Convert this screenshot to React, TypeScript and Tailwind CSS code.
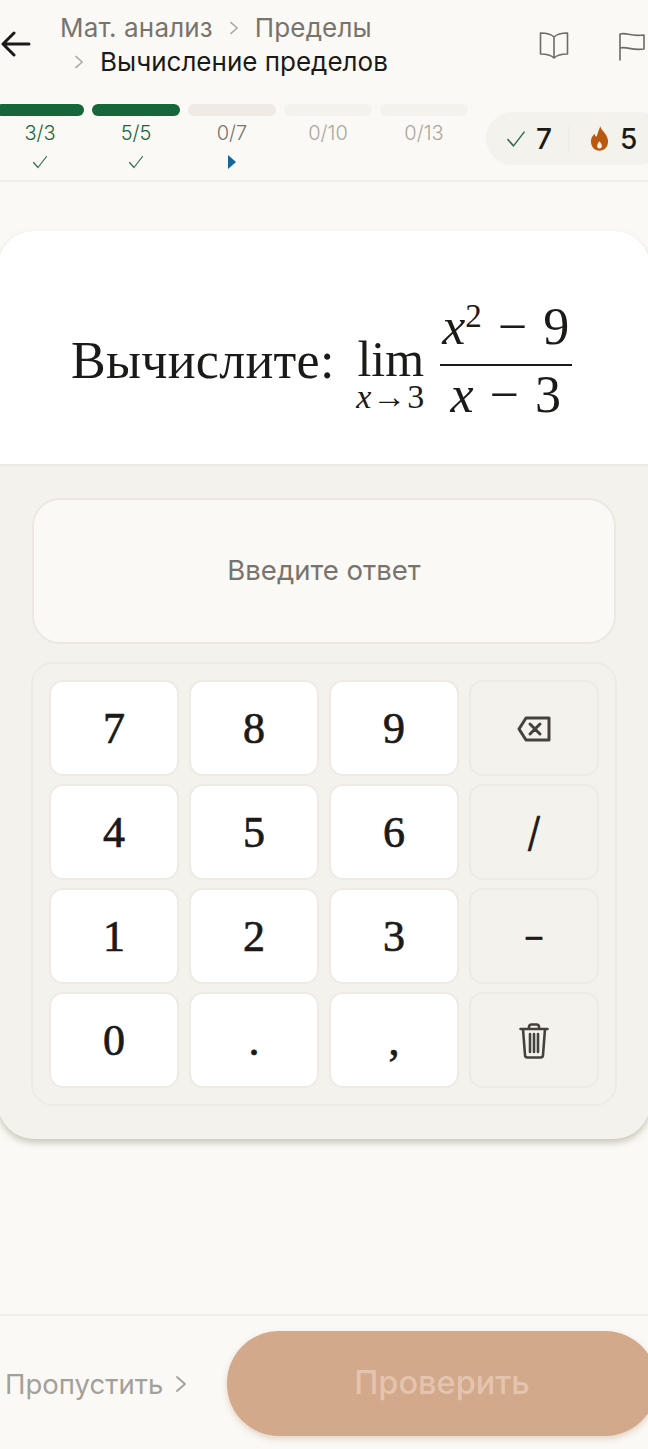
import { ReactNode } from "react";

const SANS = "font-['Inter','Noto_Sans',sans-serif]";

function Chevron({ className }: { className?: string }) {
  return (
    <svg viewBox="0 0 12 20" className={className} fill="none" stroke="currentColor" strokeWidth="1.8" strokeLinecap="round" strokeLinejoin="round">
      <path d="M2 3l8 7-8 7" />
    </svg>
  );
}

function Check({ className }: { className?: string }) {
  return (
    <svg viewBox="0 0 16 14" className={className} fill="none" stroke="currentColor" strokeWidth="1.2" strokeLinecap="round" strokeLinejoin="round">
      <path d="M1.5 7.5l4.5 5L14.5 1.5" />
    </svg>
  );
}

function Step({ label, done, active, muted, barDone, barLight }: { label: string; done?: boolean; active?: boolean; muted?: boolean; barDone?: boolean; barLight?: boolean }) {
  return (
    <div className="flex w-[88px] flex-col items-center">
      <div className={`h-3 w-full rounded-full ${barDone ? "bg-[#17663a]" : barLight ? "bg-[#f4f2ed]" : "bg-[#efebe4]"}`} />
      <div className={`mt-[7px] h-5 text-[20px] leading-5 font-light ${done ? "text-[#17663a]" : muted ? "text-[#aaa7a1]" : "text-[#78746d]"}`}>{label}</div>
      <div className="mt-[11px] flex h-4 items-center justify-center">
        {done && <Check className="h-[14px] w-4 text-[#2f6d4c]" />}
        {active && (
          <svg viewBox="0 0 10 14" className="h-[14px] w-[10px] text-[#12689c]" fill="currentColor">
            <path d="M1 0l8 7-8 7z" />
          </svg>
        )}
      </div>
    </div>
  );
}

function Key({ children, side }: { children: ReactNode; side?: boolean }) {
  return (
    <div className={`flex h-[96px] items-center justify-center rounded-[14px] border-2 border-[#eeebe6] pt-[2px] font-['Liberation_Serif',serif] text-[44px] text-[#1b1a18] [-webkit-text-stroke:0.7px_#1b1a18] ${side ? "bg-[#f4f2ed]" : "bg-white"}`}>
      {children}
    </div>
  );
}

export default function App() {
  return (
    <div className={`flex h-[1449px] w-[648px] flex-col overflow-hidden bg-[#faf9f6] ${SANS}`}>
      {/* шапка */}
      <div className="flex h-[104px] shrink-0 items-start">
        <svg viewBox="0 0 30 26" className="mt-[31px] ml-[1px] h-[26px] w-[30px] shrink-0 text-[#1b1a18]" fill="none" stroke="currentColor" strokeWidth="3" strokeLinecap="round" strokeLinejoin="round">
          <path d="M28 13H2M13 2L2 13l11 11" />
        </svg>
        <div className="ml-[29px] w-[440px] shrink-0 pt-[11px] text-[26px] leading-[34px]">
          <div className="flex items-center tracking-[0.15px] text-[#78746d]">
            Мат. анализ
            <Chevron className="mx-[16px] h-[16px] w-[10px] text-[#a9a6a0]" />
            Пределы
          </div>
          <div className="ml-[14px] flex items-center text-[#1b1a18]">
            <Chevron className="mr-[16px] h-[16px] w-[10px] text-[#a9a6a0]" />
            Вычисление пределов
          </div>
        </div>
        <svg viewBox="0 0 30 28" className="mt-[31px] ml-[39px] h-[28px] w-[30px] shrink-0 text-[#6f6b65]" fill="none" stroke="currentColor" strokeWidth="1.6" strokeLinejoin="round">
          <path d="M15 6c-3-3-8-4-13.500-4v21c5.500 0 10.500 1 13.500 4 3-3 8-4 13.500-4V2C23 2 18 3 15 6zM15 6v21" />
        </svg>
        <svg viewBox="0 0 30 30" className="mt-[31px] ml-[49px] h-[30px] w-[30px] shrink-0 text-[#6f6b65]" fill="none" stroke="currentColor" strokeWidth="1.6" strokeLinecap="round" strokeLinejoin="round">
          <path d="M2 29V3c7-2 10 3 24 1v14c-12 2-17-3-24-1" />
        </svg>
      </div>

      {/* прогресс */}
      <div className="flex h-[78px] shrink-0 items-start border-b-2 border-[#efede7]">
        <div className="-ml-1 flex gap-2">
          <Step label="3/3" done barDone />
          <Step label="5/5" done barDone />
          <Step label="0/7" active />
          <Step label="0/10" muted barLight />
          <Step label="0/13" muted barLight />
        </div>
        <div className="mt-2 ml-[18px] flex h-[53px] w-[180px] shrink-0 items-center rounded-full bg-[#f4f2ed] pl-[20px]">
          <Check className="h-[18px] w-[20px] text-[#2f6d4c]" />
          <span className="ml-[10px] text-[28px] font-medium text-[#1b1a18]">7</span>
          <div className="ml-[16px] h-[26px] w-[2px] bg-[#efede8]" />
          <svg viewBox="0 0 20 26" className="ml-[20px] h-[25px] w-[19px] text-[#b9590f]" fill="currentColor">
            <path fillRule="evenodd" d="M11 0c0 4 8 8 8 16 0 6-4 10-9 10s-9-4-9-10c0-4 2-6 4-8 0 2 1 3 2 3 1-3 2-7 4-11zM10 16c-1.500 2-2.500 3.500-2.500 5 0 1.500 1 2.500 2.500 2.500s2.500-1 2.500-2.500c0-1.500-1-3-2.500-5z" />
          </svg>
          <span className="ml-[11px] text-[28px] font-medium text-[#1b1a18]">5</span>
        </div>
      </div>

      {/* карточка задания */}
      <div className="mt-[49px] -mx-[2px] h-[908px] shrink-0 overflow-hidden rounded-[36px] bg-[#f4f2ed] shadow-[0_4px_6px_rgba(120,115,80,0.35)]">
        <div className="flex h-[235px] items-center border-b-2 border-[#ece9e3] bg-white pt-[22px] pl-[73px] font-['Liberation_Serif',serif] text-[#1b1a18]">
          <span className="mt-[4px] text-[52px] tracking-[0.3px]">Вычислите:</span>
          <div className="ml-[21px] flex w-[70px] flex-col items-center pt-[37px]">
            <span className="text-[50px] leading-[40px]">lim</span>
            <span className="text-[34px] leading-[36px] tracking-[1px] whitespace-nowrap"><i>x</i>→3</span>
          </div>
          <div className="mb-[6px] ml-[14px] flex w-[132px] flex-col items-center text-[52px]">
            <div className="leading-[75px] whitespace-nowrap">
              <i>x</i><sup className="text-[33px]">2</sup><span className="mx-[16px]">−</span>9
            </div>
            <div className="h-[2px] w-full bg-[#1b1a18]" />
            <div className="leading-[57px] whitespace-nowrap"><i>x</i><span className="mx-[16px]">−</span>3</div>
          </div>
        </div>

        <div className="px-[34px] pt-[32px]">
          <div className="flex h-[146px] items-center justify-center rounded-[28px] border-2 border-[#ece8e1] bg-[#faf9f6] text-[27.5px] text-[#78746d]">
            Введите ответ
          </div>
          <div className="mt-[18px] -mx-[1px] grid grid-cols-4 gap-x-[10px] gap-y-2 rounded-[22px] border-2 border-[#eeebe6] p-4">
            <Key>7</Key>
            <Key>8</Key>
            <Key>9</Key>
            <Key side>
              <svg viewBox="0 0 34 26" className="h-[26px] w-[34px] text-[#45423d]" fill="none" stroke="currentColor" strokeWidth="3" strokeLinejoin="round" strokeLinecap="round">
                <path d="M9 2h23v22H9L2 13zM13 8l10 10M23 8L13 18" />
              </svg>
            </Key>
            <Key>4</Key>
            <Key>5</Key>
            <Key>6</Key>
            <Key side><span className={`${SANS} text-[40px] font-light`}>/</span></Key>
            <Key>1</Key>
            <Key>2</Key>
            <Key>3</Key>
            <Key side><span className={`${SANS} text-[32px]`}>–</span></Key>
            <Key>0</Key>
            <Key>.</Key>
            <Key>,</Key>
            <Key side>
              <svg viewBox="0 0 30 36" className="h-[36px] w-[30px] text-[#45423d]" fill="none" stroke="currentColor" strokeWidth="2.600" strokeLinecap="round" strokeLinejoin="round">
                <path d="M1.500 6h27M10 6V4c0-1.500 1-2.500 2.500-2.500h5C19 1.500 20 2.500 20 4v2M4 6l2 26c0 1.500 1 2.500 2.500 2.500h13c1.500 0 2.500-1 2.500-2.500l2-26M11 11v18M15 11v18M19 11v18" />
              </svg>
            </Key>
          </div>
        </div>
      </div>

      <div className="flex-1" />

      {/* низ */}
      <div className="flex h-[135px] shrink-0 items-start border-t-2 border-[#efede8] pt-[15px]">
        <div className="mt-[36px] ml-[5px] flex w-[222px] shrink-0 items-center text-[27.5px] leading-[34px] text-[#a3a09a]">
          Пропустить
          <Chevron className="ml-[12px] h-[20px] w-[12px]" />
        </div>
        <div className="flex h-[105px] w-[430px] shrink-0 items-center justify-center rounded-[52px] bg-[#d2a98b] text-[32.5px] font-medium text-[#e4c4ae] shadow-[0_3px_6px_rgba(180,130,90,0.3)]">
          Проверить
        </div>
      </div>
    </div>
  );
}
